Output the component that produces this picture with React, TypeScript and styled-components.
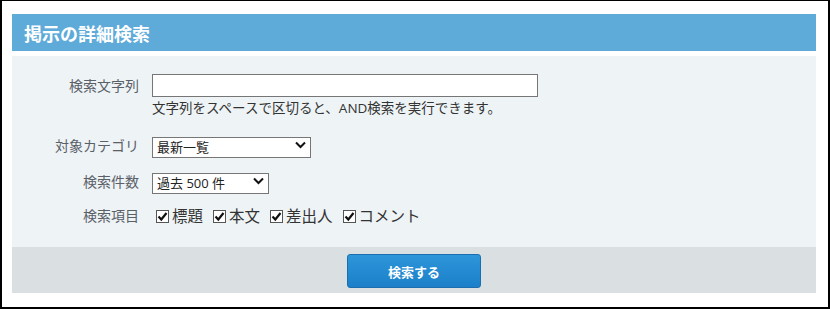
import React from "react";
import styled, { createGlobalStyle } from "styled-components";

const FONT = `"Open Sans", "Noto Sans CJK JP", "Noto Sans", sans-serif`;

const Global = createGlobalStyle`
  html, body { margin: 0; padding: 0; background: #fff; }
  body { font-family: ${FONT}; }
  * { box-sizing: border-box; }
`;

const Frame = styled.div`
  width: 830px;
  height: 309px;
  border: 2px solid #000;
  border-top-width: 1px;
  background: #fff;
  padding: 13px 12px 0 10px;
`;

const Panel = styled.div`
  width: 804px;
  display: flex;
  flex-direction: column;
`;

const Header = styled.div`
  height: 37px;
  background: #5eaad9;
  color: #fff;
  font-weight: bold;
  font-size: 18px;
  display: flex;
  align-items: center;
  padding-left: 12px;
  margin-bottom: 5px;
`;

const Body = styled.div`
  background: #eef3f6;
  height: 191px;
  padding-top: 18px;
  display: flex;
  flex-direction: column;
`;

const Row = styled.div<{ $top: number; $start?: boolean }>`
  display: grid;
  grid-template-columns: 127px 1fr;
  column-gap: 13px;
  align-items: ${(p) => (p.$start ? "start" : "center")};
  margin-top: ${(p) => p.$top}px;
`;

const Label = styled.div<{ $pad?: number }>`
  text-align: right;
  font-size: 14px;
  color: #5a6068;
  line-height: 20px;
  padding-top: ${(p) => p.$pad ?? 0}px;
`;

const Field = styled.div`
  display: flex;
  flex-direction: column;
`;

const TextInput = styled.input`
  width: 386px;
  height: 23px;
  border: 1px solid #767676;
  background: #fff;
  outline: none;
  padding: 0 4px;
  font-size: 13px;
`;

const Help = styled.div`
  margin-top: 3px;
  font-size: 13.5px;
  line-height: 17px;
  color: #333;
  white-space: nowrap;
`;

const SelectWrap = styled.div<{ $w: number }>`
  position: relative;
  width: ${(p) => p.$w}px;
  height: 21px;
`;

const Select = styled.select`
  appearance: none;
  -webkit-appearance: none;
  width: 100%;
  height: 100%;
  border: 1px solid #767676;
  border-radius: 0;
  background: #fff;
  font-family: ${FONT};
  font-size: 13px;
  color: #222;
  padding: 0 0 0 4px;
  outline: none;
`;

const Chevron = styled.svg`
  position: absolute;
  right: 5px;
  top: 6px;
  pointer-events: none;
`;

const Checks = styled.div`
  display: flex;
  align-items: center;
  gap: 10px;
  padding-left: 4px;
`;

const CheckItem = styled.label`
  display: flex;
  align-items: center;
  gap: 3px;
  font-size: 15.5px;
  color: #333;
  line-height: 20px;
`;

const Box = styled.span`
  width: 13px;
  height: 13px;
  border: 1px solid #555;
  background: #fff;
  display: inline-flex;
  align-items: center;
  justify-content: center;
`;

const Footer = styled.div`
  height: 46px;
  background: #dadfe2;
  display: flex;
  align-items: center;
  justify-content: center;
  padding-top: 2px;
`;

const Button = styled.button`
  width: 134px;
  height: 34px;
  border: 1px solid #1b6fae;
  border-radius: 3px;
  background: linear-gradient(#2d95da, #1b80c9);
  color: #fff;
  font-family: ${FONT};
  font-weight: bold;
  font-size: 13px;
  cursor: pointer;
`;

function Check({ label }: { label: string }) {
  return (
    <CheckItem>
      <Box>
        <svg width="11" height="11" viewBox="0 0 11 11">
          <path d="M1.5 5.5 L4.3 8.5 L9.5 2" fill="none" stroke="#111" strokeWidth="2.2" />
        </svg>
      </Box>
      {label}
    </CheckItem>
  );
}

function Dropdown({ width, value }: { width: number; value: string }) {
  return (
    <SelectWrap $w={width}>
      <Select defaultValue={value}>
        <option>{value}</option>
      </Select>
      <Chevron width="11" height="8" viewBox="0 0 11 8">
        <path d="M1 1.5 L5.5 6 L10 1.5" fill="none" stroke="#111" strokeWidth="2" />
      </Chevron>
    </SelectWrap>
  );
}

export default function App() {
  return (
    <>
      <Global />
      <Frame>
        <Panel>
          <Header>掲示の詳細検索</Header>
          <Body>
            <Row $top={0} $start>
              <Label $pad={2}>検索文字列</Label>
              <Field>
                <TextInput type="text" />
                <Help>文字列をスペースで区切ると、AND検索を実行できます。</Help>
              </Field>
            </Row>
            <Row $top={18}>
              <Label>対象カテゴリ</Label>
              <Dropdown width={159} value="最新一覧" />
            </Row>
            <Row $top={15}>
              <Label>検索件数</Label>
              <Dropdown width={117} value="過去 500 件" />
            </Row>
            <Row $top={14}>
              <Label>検索項目</Label>
              <Checks>
                <Check label="標題" />
                <Check label="本文" />
                <Check label="差出人" />
                <Check label="コメント" />
              </Checks>
            </Row>
          </Body>
          <Footer>
            <Button>検索する</Button>
          </Footer>
        </Panel>
      </Frame>
    </>
  );
}
